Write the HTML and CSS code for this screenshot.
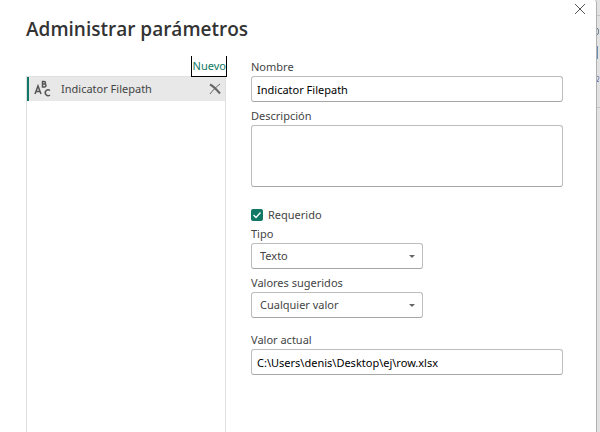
FILE: index.html
```html
<!DOCTYPE html>
<html lang="es">
<head>
<meta charset="utf-8">
<title>Administrar parámetros</title>
<link rel="stylesheet" href="styles.css">
</head>
<body>
<main class="dialog">
  <button class="close" type="button" aria-label="Cerrar">
    <svg width="12" height="12" viewBox="0 0 12 12"><path d="M1 1l10 10M11 1L1 11"/></svg>
  </button>
  <h1>Administrar parámetros</h1>
  <div class="columns">
    <section class="sidebar">
      <button class="new" type="button">Nuevo</button>
      <ul class="list">
        <li class="item">
          <svg class="type" width="18" height="18" viewBox="0 0 18 18">
            <path d="M1 14L4 6l3 8M2 11.500h4"/>
            <path d="M8.500 1.500v5.500h2a1.500 1.500 0 0 0 0-3h-2h1.700a1.200 1.200 0 0 0 0-2.500z"/>
            <path d="M16 10.500a2.900 2.900 0 1 0 0 4.500"/>
          </svg>
          <span class="name">Indicator Filepath</span>
          <button class="remove" type="button" aria-label="Eliminar">
            <svg width="12" height="12" viewBox="0 0 12 12"><path class="thick" d="M1 1.500C4 3 8 7 11 10.500"/><path d="M11 1C7 4 4 7 1 11"/></svg>
          </button>
        </li>
      </ul>
    </section>
    <form class="form">
      <div class="field">
        <label for="nombre">Nombre</label>
        <input id="nombre" type="text" value="Indicator Filepath">
      </div>
      <div class="field">
        <label for="descripcion">Descripción</label>
        <textarea id="descripcion"></textarea>
      </div>
      <div class="check">
        <input id="requerido" type="checkbox" checked>
        <label for="requerido">Requerido</label>
      </div>
      <div class="field">
        <label for="tipo">Tipo</label>
        <div class="select">
          <select id="tipo"><option>Texto</option></select>
          <svg width="6" height="3" viewBox="0 0 6 3"><path d="M0 0h6L3 3z"/></svg>
        </div>
      </div>
      <div class="field">
        <label for="sugeridos">Valores sugeridos</label>
        <div class="select">
          <select id="sugeridos"><option>Cualquier valor</option></select>
          <svg width="6" height="3" viewBox="0 0 6 3"><path d="M0 0h6L3 3z"/></svg>
        </div>
      </div>
      <div class="field current">
        <label for="actual">Valor actual</label>
        <input id="actual" type="text" value="C:\Users\denis\Desktop\ej\row.xlsx">
      </div>
    </form>
  </div>
</main>
<aside class="behind" aria-hidden="true">
  <svg width="3" height="110" viewBox="0 0 3 110">
    <path class="rule" d="M0 15.500h4M0 107.500h4"/>
    <path class="round" d="M0 28.500c1.500 0 1.500 1.500 1.500 3s0 3-1.500 3"/>
    <path class="bar" d="M.5 46v13"/>
    <path class="digit" d="M0 76.500c2-1 2.500 1 1.500 2.500L0 81.500h2"/>
  </svg>
</aside>
</body>
</html>
```
FILE: styles.css
```css
* {
  box-sizing: border-box;
}

body {
  margin: 0;
  display: flex;
  min-height: 100vh;
  background: #e2e2e2;
  color: #444;
  font: 11px/18px "Noto Sans", "Open Sans", sans-serif;
}

button,
input,
select,
textarea {
  font: inherit;
  color: inherit;
  margin: 0;
}

button {
  padding: 0;
  border: 0;
  background: none;
}

svg {
  display: block;
  fill: none;
  stroke: #555;
}

.dialog {
  position: relative;
  flex: 1;
  display: flex;
  flex-direction: column;
  padding: 16px 33px 0 26px;
  background: #fff;
  border-right: 1px solid #b0b0b0;
  border-top-right-radius: 3px;
}

.behind {
  flex: 0 0 3px;
  overflow: hidden;
}

.rule {
  stroke: #c4c4c4;
}

.round {
  stroke: #567;
}

.bar {
  stroke: #6b8fb5;
}

.digit {
  stroke: #7b84b8;
}

.close {
  position: absolute;
  top: 3px;
  right: 10px;
}

h1 {
  margin: 0;
  color: #333;
  font-family: "Open Sans", "Noto Sans", sans-serif;
  font-size: 19px;
  line-height: 26px;
  font-weight: 600;
}

.columns {
  flex: 1;
  display: grid;
  grid-template-columns: 200px 1fr;
  gap: 25px;
  padding-top: 14px;
}

.sidebar {
  display: flex;
  flex-direction: column;
}

.new {
  align-self: flex-end;
  height: 21px;
  margin: 0 -1px -1px 0;
  padding: 0 0 0 1px;
  border: 1px solid #000;
  border-top: 0;
  color: #117865;
  z-index: 1;
}

.list {
  flex: 1;
  margin: 0;
  padding: 0;
  list-style: none;
  border: 1px solid #dfdfdf;
  border-bottom: 0;
}

.item {
  display: flex;
  align-items: center;
  height: 24px;
  padding: 0 4px 0 5px;
  background: #e8e8e8;
  border-left: 2px solid #117865;
}

.type {
  stroke-width: 1.5;
}

.name {
  flex: 1;
  padding-left: 9px;
}

.remove svg {
  stroke: #666;
}

.remove .thick {
  stroke-width: 2;
}

.form {
  padding-top: 2px;
}

.field {
  margin-bottom: 5px;
}

.field > label {
  display: block;
}

input[type="text"],
textarea,
select {
  display: block;
  width: 100%;
  height: 26px;
  padding: 0 5px;
  background: #fff;
  border: 1px solid #bdbdbd;
  border-bottom-color: #a6a6a6;
  border-radius: 3px;
  color: #000;
}

textarea {
  height: 62px;
  resize: none;
}

.check {
  display: flex;
  align-items: center;
  gap: 5px;
  margin-top: 19px;
  padding-bottom: 1px;
}

input[type="checkbox"] {
  appearance: none;
  width: 12px;
  height: 12px;
  border-radius: 2px;
  background: #117865 url("data:image/svg+xml,%3Csvg xmlns='http://www.w3.org/2000/svg' viewBox='0 0 12 12'%3E%3Cpath d='M2.500 6l2.500 2.500 4.500-5' fill='none' stroke='white' stroke-width='1.300'/%3E%3C/svg%3E");
}

.select {
  display: grid;
  align-items: center;
  width: 172px;
}

.select > * {
  grid-area: 1 / 1;
}

.select svg {
  justify-self: end;
  margin-right: 8px;
  fill: #666;
  stroke: none;
  pointer-events: none;
}

select {
  appearance: none;
  padding: 0 8px;
  color: #444;
}

.current {
  margin-top: 13px;
}
```
